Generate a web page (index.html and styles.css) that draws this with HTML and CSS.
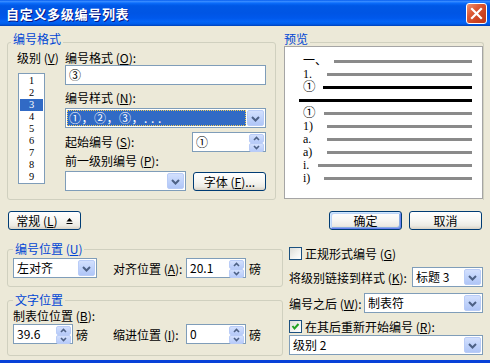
FILE: index.html
```html
<!DOCTYPE html>
<html lang="zh-CN">
<head>
<meta charset="utf-8">
<title>自定义多级编号列表</title>
<link rel="stylesheet" href="styles.css">
</head>
<body>
<div class="window">
  <div class="titlebar">
    <span class="title">自定义多级编号列表</span>
    <span class="close"><svg width="13" height="13" viewBox="0 0 13 13"><path d="M2 2 L11 11 M11 2 L2 11" stroke="#fff" stroke-width="2.2" stroke-linecap="square"/></svg></span>
  </div>
  <div class="content">
    <div class="top">
      <div class="group fmt">
        <div class="gtitle">编号格式</div>
        <div class="fmt-body">
          <div class="levels">
            <div class="lbl">级别 (<u>V</u>)</div>
            <div class="listbox">
              <div class="item">1</div>
              <div class="item">2</div>
              <div class="item sel">3</div>
              <div class="item">4</div>
              <div class="item">5</div>
              <div class="item">6</div>
              <div class="item">7</div>
              <div class="item">8</div>
              <div class="item">9</div>
            </div>
          </div>
          <div class="fields">
            <div class="lbl">编号格式 (<u>O</u>):</div>
            <div class="textbox">③</div>
            <div class="lbl f-lbl2">编号样式 (<u>N</u>):</div>
            <div class="combo focus f-combo"><span class="val"><span class="sym">①，②，③，. . .</span></span><span class="dd"><svg width="15" height="15" viewBox="0 0 15 15"><path d="M4 6 L7.5 9.5 L11 6" stroke="#4D6185" stroke-width="2" fill="none"/></svg></span></div>
            <div class="f-start">
              <span class="lbl">起始编号 (<u>S</u>):</span>
              <div class="spin w74"><span class="val">①</span><span class="spinbtns"><span class="sb"><svg width="13" height="7" viewBox="0 0 13 7"><path d="M4 5 L6.5 2.5 L9 5" stroke="#4D6185" stroke-width="1.6" fill="none"/></svg></span><span class="sb"><svg width="13" height="7" viewBox="0 0 13 7"><path d="M4 2 L6.5 4.5 L9 2" stroke="#4D6185" stroke-width="1.6" fill="none"/></svg></span></span></div>
            </div>
            <div class="lbl f-lbl4">前一级别编号 (<u>P</u>):</div>
            <div class="f-prev">
              <div class="combo w121"><span class="val"></span><span class="dd"><svg width="15" height="15" viewBox="0 0 15 15"><path d="M4 6 L7.5 9.5 L11 6" stroke="#4D6185" stroke-width="2" fill="none"/></svg></span></div>
              <button class="btn w73">字体 (<u>F</u>)...</button>
            </div>
          </div>
        </div>
      </div>
      <div class="group preview">
        <div class="gtitle">预览</div>
        <div class="pbox">
          <div class="prow"><span class="plbl w31">一、</span><span class="pline"></span></div>
          <div class="prow"><span class="plbl w24">1.</span><span class="pline"></span></div>
          <div class="prow"><span class="plbl circ w20">①</span><span class="pline dark"></span></div>
          <div class="rule"></div>
          <div class="prow"><span class="plbl circ w21">①</span><span class="pline"></span></div>
          <div class="prow"><span class="plbl w24">1)</span><span class="pline"></span></div>
          <div class="prow"><span class="plbl w24">a.</span><span class="pline"></span></div>
          <div class="prow"><span class="plbl w24">a)</span><span class="pline"></span></div>
          <div class="prow"><span class="plbl w15">i.</span><span class="pline"></span></div>
          <div class="prow"><span class="plbl w21">i)</span><span class="pline"></span></div>
        </div>
      </div>
    </div>

    <div class="actions">
      <button class="btn w73">常规 (<u>L</u>)<svg class="more" width="7" height="8" viewBox="0 0 7 8"><path d="M3.5 1 L6.5 4.5 L0.5 4.5 Z" fill="#000"/><rect x="0.5" y="6" width="6" height="1" fill="#000"/></svg></button>
      <button class="btn default w73 ok">确定</button>
      <button class="btn w73">取消</button>
    </div>

    <div class="bottom">
      <div class="leftcol">
        <div class="group pos">
          <div class="gtitle">编号位置 (<u>U</u>)</div>
          <div class="pos-row">
            <div class="combo w84"><span class="val">左对齐</span><span class="dd"><svg width="15" height="15" viewBox="0 0 15 15"><path d="M4 6 L7.5 9.5 L11 6" stroke="#4D6185" stroke-width="2" fill="none"/></svg></span></div>
            <span class="flbl">对齐位置 (<u>A</u>):</span>
            <div class="spin w60"><span class="val">20.1</span><span class="spinbtns"><span class="sb"><svg width="13" height="7" viewBox="0 0 13 7"><path d="M4 5 L6.5 2.5 L9 5" stroke="#4D6185" stroke-width="1.6" fill="none"/></svg></span><span class="sb"><svg width="13" height="7" viewBox="0 0 13 7"><path d="M4 2 L6.5 4.5 L9 2" stroke="#4D6185" stroke-width="1.6" fill="none"/></svg></span></span></div>
            <span class="unit">磅</span>
          </div>
        </div>
        <div class="group txt">
          <div class="gtitle">文字位置</div>
          <div class="lbl txt-lbl">制表位位置 (<u>B</u>):</div>
          <div class="txt-row">
            <div class="spin w60"><span class="val">39.6</span><span class="spinbtns"><span class="sb"><svg width="13" height="7" viewBox="0 0 13 7"><path d="M4 5 L6.5 2.5 L9 5" stroke="#4D6185" stroke-width="1.6" fill="none"/></svg></span><span class="sb"><svg width="13" height="7" viewBox="0 0 13 7"><path d="M4 2 L6.5 4.5 L9 2" stroke="#4D6185" stroke-width="1.6" fill="none"/></svg></span></span></div>
            <span class="unit">磅</span>
            <span class="flbl wide">缩进位置 (<u>I</u>):</span>
            <div class="spin w60"><span class="val">0</span><span class="spinbtns"><span class="sb"><svg width="13" height="7" viewBox="0 0 13 7"><path d="M4 5 L6.5 2.5 L9 5" stroke="#4D6185" stroke-width="1.6" fill="none"/></svg></span><span class="sb"><svg width="13" height="7" viewBox="0 0 13 7"><path d="M4 2 L6.5 4.5 L9 2" stroke="#4D6185" stroke-width="1.6" fill="none"/></svg></span></span></div>
            <span class="unit">磅</span>
          </div>
        </div>
      </div>
      <div class="rightcol">
        <div class="chk-row first"><span class="chk"></span><span>正规形式编号 (<u>G</u>)</span></div>
        <div class="link-row"><span>将级别链接到样式 (<u>K</u>):</span>
          <div class="combo w71"><span class="val">标题 3</span><span class="dd"><svg width="15" height="15" viewBox="0 0 15 15"><path d="M4 6 L7.5 9.5 L11 6" stroke="#4D6185" stroke-width="2" fill="none"/></svg></span></div>
        </div>
        <div class="link-row after"><span>编号之后 (<u>W</u>):</span>
          <div class="combo w119"><span class="val">制表符</span><span class="dd"><svg width="15" height="15" viewBox="0 0 15 15"><path d="M4 6 L7.5 9.5 L11 6" stroke="#4D6185" stroke-width="2" fill="none"/></svg></span></div>
        </div>
        <div class="chk-row second"><span class="chk checked"><svg width="11" height="11" viewBox="0 0 11 11"><path d="M2.5 5 L4.5 7.5 L8.5 3" stroke="#21A121" stroke-width="2" fill="none"/></svg></span><span>在其后重新开始编号 (<u>R</u>):</span></div>
        <div class="combo full restart"><span class="val">级别 2</span><span class="dd"><svg width="15" height="15" viewBox="0 0 15 15"><path d="M4 6 L7.5 9.5 L11 6" stroke="#4D6185" stroke-width="2" fill="none"/></svg></span></div>
      </div>
    </div>
  </div>
</div>
</body>
</html>
```

FILE: styles.css
```css
* { box-sizing: border-box; }
html, body { margin: 0; padding: 0; }
body {
  width: 490px; height: 363px; overflow: hidden;
  background: #ECE9D8;
  font-family: "Noto Sans CJK SC", "Noto Sans", sans-serif;
  font-size: 12px; color: #000;
}
u { text-decoration: underline; text-underline-offset: 1px; }

.window {
  width: 490px; height: 363px;
  display: flex; flex-direction: column;
  border-bottom: 3px solid #0841D8;
}
.titlebar {
  flex: 0 0 26px; height: 26px;
  display: flex; align-items: center; justify-content: space-between;
  padding: 0 3px 0 6px;
  background: linear-gradient(to bottom, #0058EE 0%, #3A8CFF 5%, #1E7BFF 9%, #0767F6 14%, #0058E6 22%, #0055E4 50%, #0058EC 70%, #0464F6 82%, #0060EE 90%, #0050D8 96%, #0040B0 100%);
}
.title {
  color: #fff; font-weight: bold; font-size: 13px; letter-spacing: 0.7px;
  text-shadow: 1px 1px 0 #0A1883;
}
.close {
  width: 21px; height: 21px;
  border: 1px solid #fff; border-radius: 3px;
  background: linear-gradient(135deg, #EE9575 0%, #DD5A36 35%, #CB4220 70%, #C13A1C 100%);
  display: flex; align-items: center; justify-content: center;
}

.content { flex: 1; padding: 0 4px 0 7px; }

.group { border: 1px solid #D0D0BF; border-radius: 3px; }
.gtitle {
  color: #0046D5; line-height: 12px; background: #ECE9D8;
  width: max-content; padding: 0 2px;
}

.top {
  display: grid; grid-template-columns: 269px 201px; column-gap: 7px;
  margin-top: 16px; height: 158px;
}
.fmt .gtitle { margin: -10px 0 0 3px; }
.fmt-body {
  display: grid; grid-template-columns: 48px 201px;
  padding: 6px 0 0 9px;
}
.lbl { line-height: 14px; white-space: nowrap; }
.listbox {
  margin: 8px 0 0 1px; width: 27px; height: 111px;
  border: 1px solid #7F9DB9; background: #fff; padding: 1px;
}
.item {
  height: 12px; line-height: 12px; text-align: center;
  font-family: "Liberation Serif", serif; font-size: 10.4px;
}
.item.sel { background: #316AC5; color: #fff; }

.textbox {
  height: 20px; border: 1px solid #7F9DB9; background: #fff;
  padding: 0 3px; line-height: 18px;
}
.f-lbl2 { margin-top: 6px; }
.f-combo { margin-top: 3px; }
.f-start { margin-top: 4px; display: flex; align-items: center; justify-content: space-between; }
.f-lbl4 { margin-top: 2px; }
.f-prev { margin-top: 3px; display: flex; align-items: center; justify-content: space-between; }

.combo, .spin {
  display: flex; height: 20px; padding: 1px;
  border: 1px solid #7F9DB9; background: #fff;
}
.combo .val, .spin .val {
  flex: 1; padding-left: 2px; line-height: 16px; white-space: nowrap; overflow: hidden;
}
.combo.focus .val {
  background: #316AC5; color: #fff; margin-right: 1px;
  outline: 1px dotted #F2CF5A; outline-offset: -1px;
}
.combo.focus .sym { letter-spacing: 0.5px; }
.dd {
  width: 17px; height: 16px;
  border: 1px solid #B9CCF7; border-radius: 2px;
  background: linear-gradient(to bottom, #D3E0FD 0%, #C2D4FB 45%, #B0C6F7 100%);
  display: flex; align-items: center; justify-content: center;
}
.spinbtns { width: 15px; display: flex; flex-direction: column; gap: 0; }
.sb {
  flex: 1; display: flex; align-items: center; justify-content: center;
  border: 1px solid #B9CCF7; border-radius: 2px;
  background: linear-gradient(to bottom, #D3E0FD 0%, #B7CBF9 100%);
}
.w121 { width: 121px; }
.w119 { width: 119px; }
.w84 { width: 84px; }
.w74 { width: 74px; }
.w73 { width: 73px; }
.w71 { width: 71px; }
.w60 { width: 60px; }
.full { width: 100%; }

.btn {
  height: 19px; padding: 0; margin: 0;
  font: inherit; color: #000;
  border: 1px solid #003C74; border-radius: 3px;
  background: linear-gradient(to bottom, #FFFFFF 0%, #F6F6F2 50%, #ECEBE4 80%, #D8D2C6 100%);
  display: flex; align-items: center; justify-content: center;
  white-space: nowrap;
}
.btn.default {
  box-shadow: inset 1px 1px 0 #CEE7FF, inset -1px -1px 0 #6982EE, inset 2px 2px 0 #BCD4F6, inset -2px -2px 0 #89ADE4;
}
.btn .more { margin-left: 8px; }

.preview { border-left: none; border-bottom: none; border-radius: 0 3px 0 0; }
.preview .gtitle { margin: -10px 0 0 0; padding: 0 2px 0 1px; }
.pbox {
  margin: 1px 0 0 1px; width: 199px; height: 153px;
  background: #fff; border: 1px solid #A5A5A5;
  padding: 8px 10px 0 18px;
}
.prow { display: flex; align-items: center; height: 13px; }
.plbl {
  flex: 0 0 auto; line-height: 13px; white-space: nowrap; overflow: visible;
  font-family: "Liberation Serif", "Noto Sans CJK SC", serif; font-size: 12px;
}
.plbl.circ { font-size: 12.5px; }
.w31 { width: 31px; } .w24 { width: 24px; } .w21 { width: 21px; }
.w20 { width: 20px; } .w15 { width: 15px; }
.pline { flex: 1; height: 3px; background: #8A8A8A; }
.pline.dark { background: #000; }
.rule { height: 3px; background: #000; margin: 5px 0 5px -4px; }

.actions {
  display: flex; gap: 7px;
  margin-top: 11px; padding: 0 4px 0 1px;
}
.actions .ok { margin-left: auto; }

.bottom {
  display: grid; grid-template-columns: 276px 194px; column-gap: 6px;
}
.pos { margin-top: 19px; }
.pos .gtitle, .txt .gtitle { margin: -7px 0 0 5px; }
.pos-row { display: flex; align-items: center; margin-top: 3px; padding: 0 0 8px 5px; }
.flbl { width: 73px; margin-left: 16px; white-space: nowrap; }
.flbl.wide { margin-left: 25px; }
.unit { width: 12px; margin-left: 3px; }
.txt { margin-top: 13px; }
.txt-lbl { margin-top: 3px; padding-left: 5px; }
.txt-row { display: flex; align-items: center; margin-top: 1px; padding: 0 0 11px 5px; }

.rightcol { display: flex; flex-direction: column; }
.chk-row { display: flex; align-items: center; gap: 3px; height: 13px; white-space: nowrap; }
.chk-row.first { margin-top: 17px; }
.chk-row.second { margin-top: 7px; }
.chk {
  width: 13px; height: 13px; flex: 0 0 13px;
  border: 1px solid #1C5180;
  background: linear-gradient(135deg, #DCDCD7 0%, #F4F4F1 60%, #FFFFFF 100%);
  display: flex; align-items: center; justify-content: center;
}
.link-row { display: flex; align-items: center; justify-content: space-between; margin-top: 7px; white-space: nowrap; }
.link-row.after { margin-top: 6px; }
.restart { margin-top: 2px; }
```
